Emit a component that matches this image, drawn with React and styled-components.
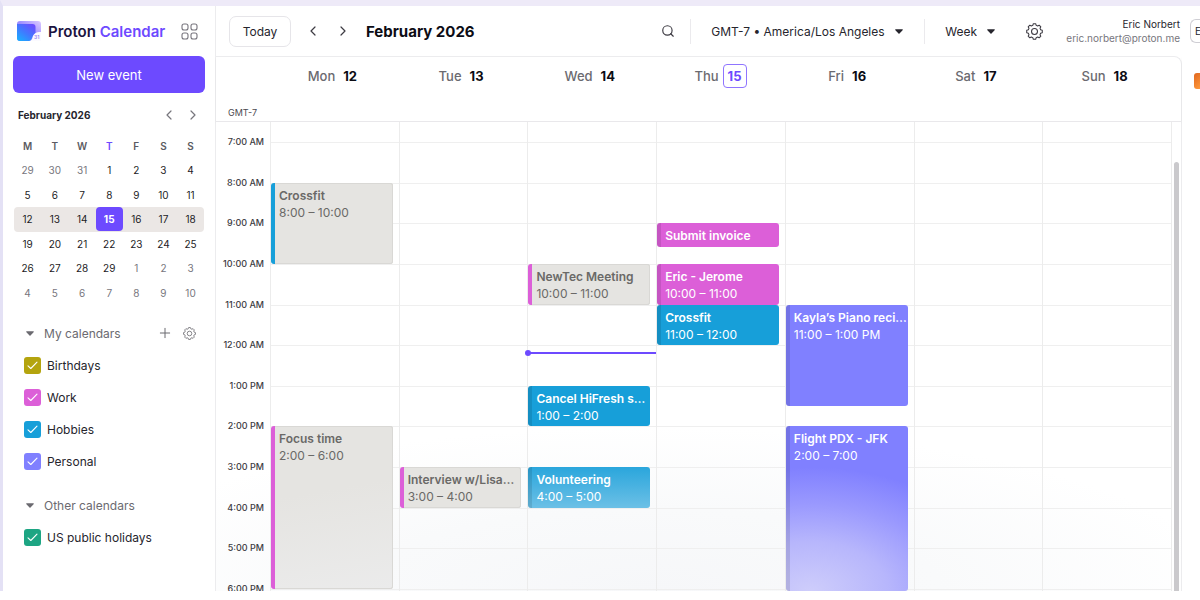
import styled, { createGlobalStyle, css } from 'styled-components'
import { Plus, Search } from 'lucide-react'

const GlobalStyle = createGlobalStyle`
	*, *::before, *::after {
		box-sizing: border-box;
	}
	body {
		margin: 0;
		background: #fff;
		color: #26252d;
		font-family: Inter, "Liberation Sans", sans-serif;
		font-size: 12px;
		overflow: hidden;
	}
	button, select, input {
		margin: 0;
		padding: 0;
		border: 0;
		background: none;
		color: inherit;
		font: inherit;
	}
	button, select {
		cursor: pointer;
	}
`

const WEEKDAYS = ['M', 'T', 'W', 'T', 'F', 'S', 'S']

const MINI_WEEKS = [
	[29, 30, 31, 1, 2, 3, 4],
	[5, 6, 7, 8, 9, 10, 11],
	[12, 13, 14, 15, 16, 17, 18],
	[19, 20, 21, 22, 23, 24, 25],
	[26, 27, 28, 29, 1, 2, 3],
	[4, 5, 6, 7, 8, 9, 10],
]

const MY_CALENDARS = [
	{ name: 'Birthdays', color: '#b4a40e' },
	{ name: 'Work', color: '#dc5fd8' },
	{ name: 'Hobbies', color: '#179fd9' },
	{ name: 'Personal', color: '#8080ff' },
]

const OTHER_CALENDARS = [{ name: 'US public holidays', color: '#1da583' }]

const HOURS = ['7:00 AM', '8:00 AM', '9:00 AM', '10:00 AM', '11:00 AM', '12:00 AM', '1:00 PM', '2:00 PM', '3:00 PM', '4:00 PM', '5:00 PM', '6:00 PM']

// start and length are in hours, on the 24 hour clock
const DAYS = [
	{
		name: 'Mon', date: 12, events: [
			{ title: 'Crossfit', time: '8:00 – 10:00', start: 8, length: 2, kind: 'past', edge: '#179fd9' },
			{ title: 'Focus time', time: '2:00 – 6:00', start: 14, length: 4, kind: 'pastFaded', edge: '#dc5fd8' },
		],
	},
	{
		name: 'Tue', date: 13, events: [
			{ title: 'Interview w/Lisa…', time: '3:00 – 4:00', start: 15, length: 1, kind: 'past', edge: '#dc5fd8' },
		],
	},
	{
		name: 'Wed', date: 14, now: true, events: [
			{ title: 'NewTec Meeting', time: '10:00 – 11:00', start: 10, length: 1, kind: 'past', edge: '#dc5fd8' },
			{ title: 'Cancel HiFresh s…', time: '1:00 – 2:00', start: 13, length: 1, kind: 'hobbies' },
			{ title: 'Volunteering', time: '4:00 – 5:00', start: 15, length: 1, kind: 'faded' },
		],
	},
	{
		name: 'Thu', date: 15, today: true, events: [
			{ title: 'Submit invoice', start: 9, length: 0.5, kind: 'work' },
			{ title: 'Eric - Jerome', time: '10:00 – 11:00', start: 10, length: 1, kind: 'work' },
			{ title: 'Crossfit', time: '11:00 – 12:00', start: 11, length: 1, kind: 'hobbies' },
		],
	},
	{
		name: 'Fri', date: 16, events: [
			{ title: 'Kayla’s Piano reci…', time: '11:00 – 1:00 PM', start: 11, length: 2.5, kind: 'personal' },
			{ title: 'Flight PDX - JFK', time: '2:00 – 7:00', start: 14, length: 5, kind: 'flight' },
		],
	},
	{ name: 'Sat', date: 17, events: [] },
	{ name: 'Sun', date: 18, events: [] },
]

const FILLS = {
	past: '#e5e4e1',
	pastFaded: 'linear-gradient(170deg, #e5e4e1 40%, #ebebeb)',
	work: '#dc5fd8',
	hobbies: '#179fd9',
	faded: 'linear-gradient(180deg, #2aa6dc, #6cc0e6)',
	personal: '#8080ff',
	flight: 'radial-gradient(160% 75% at 20% 100%, #cecdfb 0%, #b7b6fc 40%, #9a99fe 70%, #8080ff 100%)',
}

/* ---- icons ---- */

const gearPath = (() => {
	const points = []
	for (let i = 0; i < 8; i++) {
		const a = (i * Math.PI) / 4
		;[[-0.27, 6], [-0.15, 7.4], [0.15, 7.4], [0.27, 6]].forEach(([d, r]) => {
			points.push(`${(8 + r * Math.sin(a + d)).toFixed(2)} ${(8 - r * Math.cos(a + d)).toFixed(2)}`)
		})
	}
	return `M${points.join('L')}Z`
})()

const Gear = ({ size }) => (
	<svg width={size} height={size} viewBox="0 0 16 16" fill="none" stroke="currentColor" strokeLinejoin="round">
		<path d={gearPath} />
		<circle cx="8" cy="8" r="2.8" />
	</svg>
)

const Chevron = ({ right }) => (
	<svg width="8" height="12" viewBox="0 0 8 12" fill="none" stroke="currentColor" strokeWidth="1.2" strokeLinecap="round" strokeLinejoin="round">
		<path d={right ? 'M2 2l4 4-4 4' : 'M6 2L2 6l4 4'} />
	</svg>
)

const Caret = () => (
	<svg width="8" height="5" viewBox="0 0 8 5" fill="currentColor">
		<path d="M.8.3h6.4c.6 0 .8.5.4.9L4.5 4.4a.7.7 0 0 1-1 0L.4 1.2C0 .8.2.3.8.3z" />
	</svg>
)

const Check = () => (
	<svg width="11" height="9" viewBox="0 0 11 9" fill="none" stroke="#fff" strokeWidth="1.1" strokeLinecap="round" strokeLinejoin="round">
		<path d="M1 4.8l2.8 2.7L10 1.2" />
	</svg>
)

const AppsIcon = () => (
	<svg width="17" height="17" viewBox="0 0 17 17" fill="none" stroke="#77757d" strokeWidth="1.1">
		<rect x="1" y="1" width="6" height="6" rx="2" />
		<rect x="10" y="1" width="6" height="6" rx="2" />
		<rect x="1" y="10" width="6" height="6" rx="2" />
		<rect x="10" y="10" width="6" height="6" rx="2" />
	</svg>
)

const LogoMark = () => (
	<svg width="24" height="20" viewBox="0 0 24 20">
		<defs>
			<linearGradient id="back" x1="0" y1="1" x2="1" y2="0">
				<stop offset="0" stopColor="#6f8dff" />
				<stop offset=".5" stopColor="#9d8cff" />
				<stop offset="1" stopColor="#dccbff" />
			</linearGradient>
			<linearGradient id="front" x1="0" y1="1" x2=".8" y2="0">
				<stop offset="0" stopColor="#16b4ff" />
				<stop offset=".5" stopColor="#3f7bff" />
				<stop offset="1" stopColor="#6a4cff" />
			</linearGradient>
		</defs>
		<path d="M3 0h18a3 3 0 0 1 3 3v9l-8 8H3a3 3 0 0 1-3-3V3a3 3 0 0 1 3-3z" fill="url(#back)" />
		<path d="M0 3h15.5a3 3 0 0 1 3 3v6L13 20H3a3 3 0 0 1-3-3z" fill="url(#front)" />
		<path d="M24 11v9H12c2 0 3-1.2 3.5-3.5.8-3.5 3-5.5 8.5-5.5z" fill="#fbfaff" />
		<text x="17" y="18" fontSize="5" fontWeight="700" fill="#a191f5">31</text>
	</svg>
)

/* ---- frame ---- */

const Frame = styled.div`
	display: flex;
	height: calc(100vh - 9px);
	overflow: hidden;
	border-top: 6px solid #eeeaf8;
	border-left: 3px solid #e4e1f5;
`

/* ---- sidebar ---- */

const Sidebar = styled.aside`
	flex: 0 0 213px;
	display: flex;
	flex-direction: column;
	padding: 13px 10px 0;
	border-right: 1px solid #ececee;
`

const Brand = styled.div`
	display: flex;
	align-items: center;
	height: 24px;
	margin-bottom: 13px;
	padding: 0 7px 0 4px;
`

const Wordmark = styled.a`
	display: flex;
	align-items: center;
	gap: 7px;
	color: #1b1340;
	font-size: 15px;
	font-weight: 600;
	text-decoration: none;
	white-space: nowrap;

	b {
		color: #6d4aff;
		font-weight: 600;
	}
`

const IconButton = styled.button`
	display: flex;
	align-items: center;
	justify-content: center;
	width: 24px;
	height: 24px;
	color: ${p => p.$color || '#3d3b43'};
`

const AppsButton = styled(IconButton)`
	width: 17px;
	margin-left: auto;
`

const NewEvent = styled.button`
	height: 37px;
	border-radius: 6px;
	background: #6d4aff;
	color: #fff;
	font-size: 13px;
`

const MiniHead = styled.div`
	display: flex;
	align-items: center;
	height: 24px;
	margin: 10px 0 7px;
	padding-left: 5px;

	h2 {
		flex: 1;
		margin: 0;
		font-size: 10px;
		font-weight: 700;
	}
`

const MiniTable = styled.table`
	height: 171px;
	margin: 0 1px;
	border-collapse: separate;
	border-spacing: 0;
	table-layout: fixed;
	font-size: 10px;

	th, td {
		padding: 0;
		text-align: center;
	}
`

const WeekdayCell = styled.th`
	height: 24px;
	color: ${p => (p.$active ? '#6d4aff' : '#5c5b62')};
	font-weight: 600;
`

const MiniRow = styled.tr`
	${p => p.$selected && css`
		td {
			background: #ebe7e5;
		}
		td:first-child {
			border-radius: 4px 0 0 4px;
		}
		td:last-child {
			border-radius: 0 4px 4px 0;
		}
	`}
`

const MiniDay = styled.button`
	display: block;
	width: 100%;
	height: 24px;
	border-radius: 4px;
	color: ${p => (p.$muted ? '#77767d' : '#1c1b24')};
	${p => p.$today && css`
		background: #6d4aff;
		color: #fff;
		font-weight: 700;
	`}
`

const GroupHead = styled.div`
	display: flex;
	align-items: center;
	height: 24px;
	margin-top: 16px;
	padding: 0 4px 0 13px;
	color: #6b6a70;
`

const GroupToggle = styled.button`
	display: flex;
	align-items: center;
	gap: 10px;
	margin-right: auto;
	white-space: nowrap;
`

const CalendarList = styled.ul`
	margin: 4px 0 0;
	padding: 0 0 0 11px;
	list-style: none;
`

const CalendarLabel = styled.label`
	display: flex;
	align-items: center;
	gap: 6px;
	height: 32px;
`

const CheckHolder = styled.span`
	display: grid;
	place-items: center;

	> * {
		grid-area: 1 / 1;
	}
	svg {
		pointer-events: none;
	}
`

const Checkbox = styled.input`
	appearance: none;
	width: 17px;
	height: 17px;
	border-radius: 3px;
	background: ${p => p.$color};
`

/* ---- toolbar ---- */

const Main = styled.main`
	flex: 1;
	min-width: 0;
	display: flex;
	flex-direction: column;
`

const Toolbar = styled.header`
	flex: none;
	display: flex;
	align-items: center;
	height: 50px;
	padding-left: 13px;
`

const TodayButton = styled.button`
	width: 62px;
	height: 31px;
	border: 1px solid #e6e5e9;
	border-radius: 7px;
`

const Nav = styled.div`
	display: flex;
	gap: 6px;
	margin: 0 11px 0 10px;
`

const Title = styled.h1`
	flex: 1;
	margin: 0;
	color: #0c0c14;
	font-size: 15px;
	font-weight: 700;
	white-space: nowrap;
`

const Divider = styled.span`
	width: 1px;
	height: 25px;
	margin: 0 20px 0 ${p => (p.$wide ? 21 : 10)}px;
	background: #ebeaed;
`

const Picker = styled.label`
	display: flex;
	align-items: center;
	gap: 10px;

	select {
		appearance: none;
		outline: none;
	}
	svg {
		pointer-events: none;
	}
`

const SettingsButton = styled(IconButton)`
	margin-left: 27px;
`

const User = styled.div`
	margin: 0 10px 0 20px;
	font-size: 10px;
	line-height: 14px;
	text-align: right;
	white-space: nowrap;

	span {
		color: #77767d;
	}
`

const Avatar = styled.button`
	flex: none;
	width: 10px;
	height: 24px;
	padding-left: 4px;
	border: 1px solid #cfced4;
	border-right: 0;
	border-radius: 6px 0 0 6px;
	overflow: hidden;
	font-size: 10px;
	text-align: left;
`

/* ---- week view ---- */

const Content = styled.div`
	flex: 1;
	min-height: 0;
	display: flex;
`

const Panel = styled.section`
	flex: 1;
	min-width: 0;
	display: flex;
	flex-direction: column;
	border: 1px solid #ececee;
	border-width: 1px 1px 0 0;
	border-top-right-radius: 8px;
`

const AppRail = styled.nav`
	flex: 0 0 18px;
	display: flex;
	justify-content: flex-end;
	padding-top: 17px;
`

const RailApp = styled.button`
	width: 6px;
	height: 16px;
	border-radius: 3px 0 0 3px;
	background: linear-gradient(135deg, #e0661f, #ff9a3c);
`

const WeekHead = styled.div`
	flex: none;
	display: grid;
	grid-template-columns: 54px repeat(7, 1fr) 10px;
	height: 65px;
	border-bottom: 1px solid #e9e8eb;
	box-shadow: 0 1px 2px rgba(0, 0, 0, 0.05);
`

const ZoneLabel = styled.span`
	align-self: end;
	padding: 0 0 3px 12px;
	color: #4a4950;
	font-size: 9px;
	line-height: 10px;
`

const DayHead = styled.div`
	display: flex;
	justify-content: center;
	align-items: center;
	gap: ${p => (p.$today ? 4 : 8)}px;
	height: 38px;
	padding-right: ${p => (p.$today ? 0 : 4)}px;
	color: #6b6a70;
	font-size: 13px;
	font-weight: 500;

	b {
		color: #0c0c14;
		font-weight: 700;
	}
	${p => p.$today && css`
		b {
			width: 24px;
			height: 24px;
			border: 1px solid #8f75ff;
			border-radius: 4px;
			color: #6d4aff;
			line-height: 22px;
			text-align: center;
		}
	`}
`

const WeekBody = styled.div`
	flex: 1;
	min-height: 0;
	display: grid;
	grid-template-columns: 54px repeat(7, minmax(0, 1fr)) 10px;
	grid-template-rows: minmax(0, 1fr);
	background: radial-gradient(60% 35% at 45% 100%, #f6f7f9 0%, #f9fafb 50%, #fff 100%);
`

// four tracks for each hour between 7:00 and 18:00
const timeTracks = css`
	display: grid;
	grid-template-rows: 20px repeat(44, minmax(0, 1fr)) 2px;
	min-height: 0;
`

const HourLabels = styled.div`
	${timeTracks}
	justify-items: end;
	padding-right: 6px;
	overflow: hidden;
	color: #3d3c43;
	font-size: 9px;
	font-weight: 500;
	line-height: 12px;
`

const HourLabel = styled.span`
	grid-row: ${p => p.$row};
	height: 12px;
	margin-top: -6px;
	white-space: nowrap;
`

const DayColumn = styled.div`
	${timeTracks}
	grid-template-columns: minmax(0, 1fr);
	min-width: 0;
	border-left: 1px solid #ececec;
`

const HourLine = styled.i`
	grid-area: ${p => p.$row} / 1;
	height: 1px;
	background: #efefef;
`

const Event = styled.button`
	grid-column: 1;
	grid-row: ${p => p.$row} / span ${p => p.$span};
	display: flex;
	flex-direction: column;
	min-height: 24px;
	margin-right: 6px;
	padding: 4px 0 0 4px;
	border-left: 4px solid ${p => p.$edge || 'rgba(0, 0, 0, 0.1)'};
	border-radius: 3px;
	background: ${p => FILLS[p.$kind]};
	background-origin: border-box;
	color: #fff;
	line-height: 17px;
	text-align: left;
	${p => p.$kind.startsWith('past') && css`
		box-shadow: inset -1px 0 #d9d8d5, inset 0 1px #d9d8d5, inset 0 -1px #d9d8d5;
		color: #6a6967;
	`}

	strong, span {
		max-width: 100%;
		overflow: hidden;
		text-overflow: ellipsis;
		white-space: nowrap;
	}
	strong {
		font-weight: 600;
	}
`

const NowLine = styled.div`
	position: relative;
	grid-area: 22 / 1 / span 1;
	align-self: end;
	height: 2px;
	margin-bottom: 1px;
	background: #6d4aff;

	&::before {
		content: '';
		position: absolute;
		top: -2px;
		left: -3px;
		width: 6px;
		height: 6px;
		border-radius: 50%;
		background: #6d4aff;
	}
`

const ScrollTrack = styled.div`
	display: flex;
	justify-content: center;
	padding-top: 40px;
	border-left: 1px solid #ececec;
`

const ScrollThumb = styled.div`
	width: 5px;
	border-radius: 3px 3px 0 0;
	background: #cac9cc;
`

const rowAt = hour => (hour - 7) * 4 + 2

const MiniCalendar = () => (
	<>
		<MiniHead>
			<h2>February 2026</h2>
			<IconButton $color="#77767d" aria-label="Previous month"><Chevron /></IconButton>
			<IconButton $color="#77767d" aria-label="Next month"><Chevron right /></IconButton>
		</MiniHead>
		<MiniTable>
			<thead>
				<tr>
					{WEEKDAYS.map((day, i) => <WeekdayCell key={i} $active={i === 3}>{day}</WeekdayCell>)}
				</tr>
			</thead>
			<tbody>
				{MINI_WEEKS.map((week, w) => (
					<MiniRow key={w} $selected={w === 2}>
						{week.map((day, d) => (
							<td key={d}>
								<MiniDay $today={day === 15} $muted={(w === 0 && day > 7) || (w > 3 && day < 20)}>{day}</MiniDay>
							</td>
						))}
					</MiniRow>
				))}
			</tbody>
		</MiniTable>
	</>
)

const Calendars = ({ items }) => (
	<CalendarList>
		{items.map(({ name, color }) => (
			<li key={name}>
				<CalendarLabel>
					<CheckHolder>
						<Checkbox type="checkbox" defaultChecked $color={color} />
						<Check />
					</CheckHolder>
					{name}
				</CalendarLabel>
			</li>
		))}
	</CalendarList>
)

const Day = ({ day }) => (
	<DayColumn>
		{HOURS.map((hour, i) => <HourLine key={hour} $row={i * 4 + 2} />)}
		{day.events.map(({ title, time, start, length, kind, edge }) => (
			<Event
				key={title}
				$row={rowAt(start)}
				$span={Math.min(length * 4, 47 - rowAt(start))}
				$kind={kind}
				$edge={edge}
			>
				<strong>{title}</strong>
				{time ? <span>{time}</span> : null}
			</Event>
		))}
		{day.now ? <NowLine /> : null}
	</DayColumn>
)

export default function App() {
	return (
		<>
			<GlobalStyle />
			<Frame>
				<Sidebar>
					<Brand>
						<Wordmark href="#">
							<LogoMark />
							<span>Proton <b>Calendar</b></span>
						</Wordmark>
						<AppsButton aria-label="Apps"><AppsIcon /></AppsButton>
					</Brand>
					<NewEvent>New event</NewEvent>
					<MiniCalendar />
					<GroupHead>
						<GroupToggle><Caret />My calendars</GroupToggle>
						<IconButton aria-label="Add calendar" $color="#6b6a70"><Plus size={16} strokeWidth={1.5} /></IconButton>
						<IconButton aria-label="Calendar settings" $color="#6b6a70"><Gear size={13} /></IconButton>
					</GroupHead>
					<Calendars items={MY_CALENDARS} />
					<GroupHead>
						<GroupToggle><Caret />Other calendars</GroupToggle>
					</GroupHead>
					<Calendars items={OTHER_CALENDARS} />
				</Sidebar>
				<Main>
					<Toolbar>
						<TodayButton>Today</TodayButton>
						<Nav>
							<IconButton aria-label="Previous week"><Chevron /></IconButton>
							<IconButton aria-label="Next week"><Chevron right /></IconButton>
						</Nav>
						<Title>February 2026</Title>
						<IconButton aria-label="Search"><Search size={14} strokeWidth={2} /></IconButton>
						<Divider />
						<Picker>
							<select aria-label="Time zone"><option>GMT-7 • America/Los Angeles</option></select>
							<Caret />
						</Picker>
						<Divider $wide />
						<Picker>
							<select aria-label="View"><option>Week</option></select>
							<Caret />
						</Picker>
						<SettingsButton aria-label="Settings"><Gear size={17} /></SettingsButton>
						<User>
							<div>Eric Norbert</div>
							<span>eric.norbert@proton.me</span>
						</User>
						<Avatar aria-label="Account">E</Avatar>
					</Toolbar>
					<Content>
						<Panel>
							<WeekHead>
								<ZoneLabel>GMT-7</ZoneLabel>
								{DAYS.map(({ name, date, today }) => (
									<DayHead key={name} $today={today}>{name} <b>{date}</b></DayHead>
								))}
							</WeekHead>
							<WeekBody>
								<HourLabels>
									{HOURS.map((hour, i) => <HourLabel key={hour} $row={i * 4 + 2}>{hour}</HourLabel>)}
								</HourLabels>
								{DAYS.map(day => <Day key={day.name} day={day} />)}
								<ScrollTrack><ScrollThumb /></ScrollTrack>
							</WeekBody>
						</Panel>
						<AppRail><RailApp aria-label="Contacts" /></AppRail>
					</Content>
				</Main>
			</Frame>
		</>
	)
}
